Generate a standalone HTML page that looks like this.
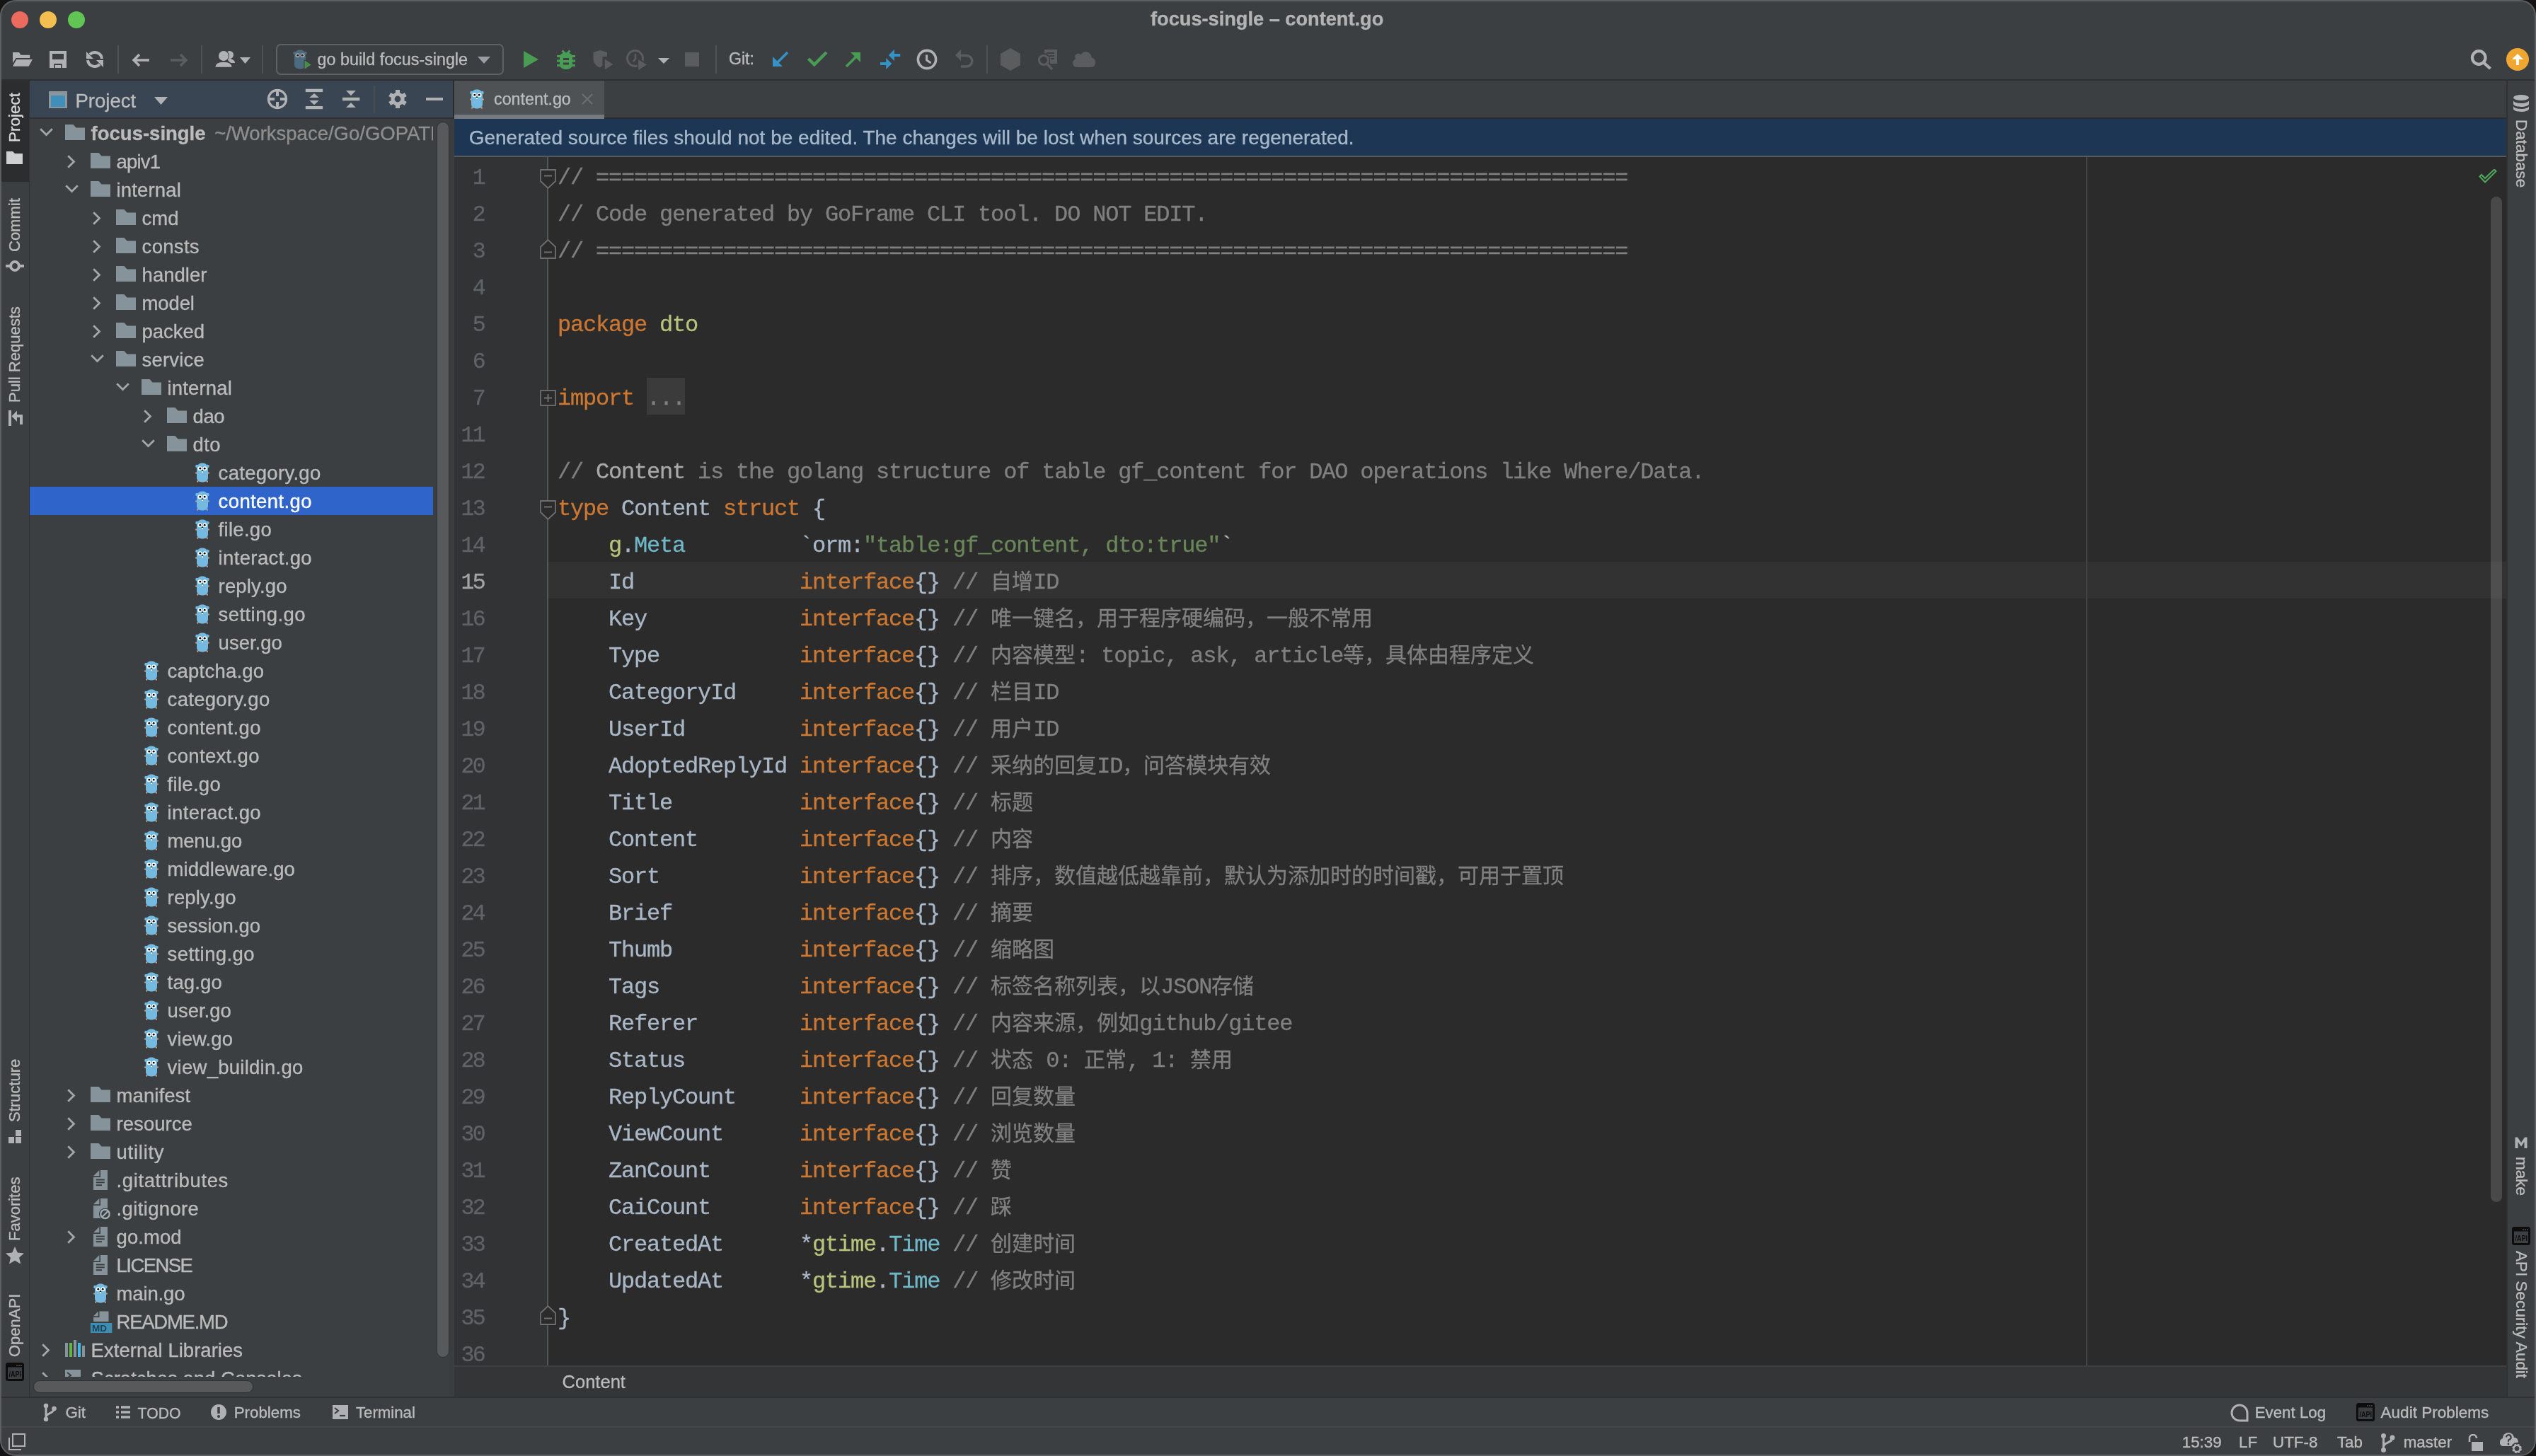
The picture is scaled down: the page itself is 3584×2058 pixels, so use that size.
<!DOCTYPE html><html lang="zh-CN"><head><meta charset="utf-8"><title>GoLand</title><style>
html,body{margin:0;padding:0;}
body{width:3584px;height:2058px;overflow:hidden;background:#141414;position:relative;font-family:'Liberation Sans',sans-serif;}
#win{position:absolute;left:0;top:0;width:3584px;height:2058px;border-radius:22px;overflow:hidden;background:#3c3f41;will-change:transform;}
#win div,#win svg{position:absolute;}
.t{white-space:pre;-webkit-text-stroke:0.35px currentColor;}
.code{font-family:'Liberation Mono',monospace;font-size:32px;letter-spacing:-1.2px;white-space:pre;-webkit-text-stroke:0.3px currentColor;}
.cj{font-size:30px;letter-spacing:0;}
.kw{color:#cc7832}.id{color:#a9b7c6}.cm{color:#808080}.cr{color:#a9a9a9}.pk{color:#b7c27b}.ty{color:#70b7c8}.st{color:#6a8759}

</style></head><body><div id="win">
<div style="left:0px;top:0px;width:3584px;height:112px;background:#3c3f41;"></div>
<div style="left:16px;top:16px;width:24px;height:24px;border-radius:50%;background:#ed6a5e"></div>
<div style="left:56px;top:16px;width:24px;height:24px;border-radius:50%;background:#f5bf4f"></div>
<div style="left:96px;top:16px;width:24px;height:24px;border-radius:50%;background:#61c554"></div>
<div class="t " style="left:1626px;top:12.88px;font-size:27.2px;line-height:27.2px;color:#b3b3b3;font-family:'Liberation Sans', sans-serif;font-weight:bold;">focus-single – content.go</div>
<div style="left:0px;top:112px;width:3584px;height:2px;background:#2e2f30;"></div>
<svg style="left:18px;top:72px;" width="29" height="23" viewBox="0 0 29 23"><path d="M0 2H9L11.4 5.8H24.1V10H4.5L0 17.3z" fill="#afb1b3"/><path d="M5.2 12H28L22.5 21.8H0z" fill="#afb1b3"/></svg>
<svg style="left:70px;top:72px;" width="24" height="24" viewBox="0 0 24 24"><path d="M0 0H24V24H0z M4 4.1V11.9H20V4.1z" fill="#afb1b3" fill-rule="evenodd"/><rect x="6.2" y="18" width="11.6" height="6" fill="#3c3f41"/><rect x="7.9" y="20" width="8.2" height="4" fill="#afb1b3"/></svg>
<svg style="left:122px;top:72px;" width="24" height="24" viewBox="0 0 24 24"><path d="M22 11A10 10 0 0 0 5 5" stroke="#afb1b3" stroke-width="4" fill="none"/><path d="M0 1V11H10z" fill="#afb1b3"/><path d="M2 13A10 10 0 0 0 19 19" stroke="#afb1b3" stroke-width="4" fill="none"/><path d="M24 23V13H14z" fill="#afb1b3"/></svg>
<div style="left:166px;top:64px;width:2px;height:40px;background:#505355;"></div>
<svg style="left:186px;top:75px;" width="26" height="20" viewBox="0 0 26 20"><path d="M25 10H4 M11 2L3 10l8 8" stroke="#afb1b3" stroke-width="3.5" fill="none"/></svg>
<svg style="left:240px;top:75px;" width="26" height="20" viewBox="0 0 26 20"><path d="M1 10h21 M15 2l8 8-8 8" stroke="#5a5c5e" stroke-width="3.5" fill="none"/></svg>
<div style="left:284px;top:64px;width:2px;height:40px;background:#505355;"></div>
<svg style="left:303px;top:71px;" width="31" height="25" viewBox="0 0 31 25"><circle cx="21.5" cy="6.5" r="5.5" fill="#afb1b3"/><path d="M17 11C25 12 29 14 29 18H22z" fill="#afb1b3"/><circle cx="13" cy="8" r="7.2" fill="#afb1b3" stroke="#3c3f41" stroke-width="1.6"/><path d="M0.5 24.5C0.5 18 5 16 13 16S25.5 18 25.5 24.5z" fill="#afb1b3" stroke="#3c3f41" stroke-width="1.6"/><circle cx="13" cy="8" r="7" fill="#afb1b3"/></svg>
<svg style="left:339px;top:81px;" width="15" height="9" viewBox="0 0 15 9"><path d="M0 0h15L7.5 9z" fill="#afb1b3"/></svg>
<div style="left:370px;top:64px;width:2px;height:40px;background:#505355;"></div>
<div style="left:390px;top:62px;width:318px;height:40px;border:2px solid #5e6161;border-radius:7px;"></div>
<svg style="left:414px;top:70px" width="20" height="28" viewBox="0 0 20 28"><use href="#gopherdim"/></svg>
<svg style="left:429px;top:84px;" width="12" height="15" viewBox="0 0 12 15"><path d="M1 0.5v14l10.5-7z" fill="#4a8b4e" stroke="#3c3f41" stroke-width="1"/></svg>
<div class="t " style="left:448.6px;top:73.19px;font-size:23.3px;line-height:23.3px;color:#bbbbbb;font-family:'Liberation Sans', sans-serif;">go build focus-single</div>
<svg style="left:675px;top:80px;" width="18" height="10" viewBox="0 0 18 10"><path d="M0 0h18L9 10z" fill="#9a9da1"/></svg>
<svg style="left:740px;top:72px;" width="21" height="24" viewBox="0 0 21 24"><path d="M0 0v24l21-12z" fill="#499c54"/></svg>
<svg style="left:787px;top:69px;" width="26" height="30" viewBox="0 0 26 30"><path d="M7.5 2.5L12 7M18.5 2.5L14 7" stroke="#499c54" stroke-width="3" fill="none"/><path d="M4 12C4 7 8 5.5 13 5.5S22 7 22 12V22C22 26.5 18 29 13 29S4 26.5 4 22z" fill="#499c54"/><rect x="0" y="9" width="26" height="3" fill="#499c54"/><rect x="0" y="15.5" width="26" height="3" fill="#499c54"/><rect x="0" y="22" width="26" height="3" fill="#499c54"/><rect x="9" y="13" width="8" height="3" fill="#3c3f41"/><rect x="9" y="19.5" width="8" height="3" fill="#3c3f41"/></svg>
<svg style="left:838px;top:70px;" width="30" height="31" viewBox="0 0 30 31"><path d="M0.5 4L10 1l10 3v6h-6.5v13l-4 2.5C4 23 0.5 19 0.5 13z" fill="#5a5c5e"/><path d="M16 12v18l14-9z" fill="#5a5c5e" stroke="#3c3f41" stroke-width="1.5"/></svg>
<svg style="left:885px;top:70px;" width="31" height="31" viewBox="0 0 31 31"><circle cx="12.5" cy="12.5" r="11" stroke="#5a5c5e" stroke-width="3" fill="none"/><path d="M13 6v7l-3 4" stroke="#5a5c5e" stroke-width="2.5" fill="none"/><path d="M16.5 12.5v18l14-9z" fill="#5a5c5e" stroke="#3c3f41" stroke-width="1.5"/></svg>
<svg style="left:930px;top:82px;" width="16" height="8" viewBox="0 0 16 8"><path d="M0 0h16L8 8z" fill="#afb1b3"/></svg>
<div style="left:968px;top:74px;width:20px;height:20px;background:#5a5c5e;"></div>
<div style="left:1011px;top:64px;width:2px;height:40px;background:#505355;"></div>
<div class="t " style="left:1030px;top:72.45px;font-size:23px;line-height:23px;color:#bbbbbb;font-family:'Liberation Sans', sans-serif;">Git:</div>
<svg style="left:1090px;top:70px;" width="26" height="28" viewBox="0 0 26 28"><path d="M2 10V24H16z" fill="#3592c4"/><path d="M23 4L7 20" stroke="#3592c4" stroke-width="3.6"/></svg>
<svg style="left:1140px;top:71px;" width="30" height="23" viewBox="0 0 30 23"><path d="M2.5 12l8.3 8.3L28 3" stroke="#499c54" stroke-width="4.4" fill="none"/></svg>
<svg style="left:1193px;top:72px;" width="25" height="25" viewBox="0 0 25 25"><path d="M9 2H23V16z" fill="#499c54"/><path d="M3 22L17 8" stroke="#499c54" stroke-width="3.6"/></svg>
<svg style="left:1243px;top:69px;" width="31" height="31" viewBox="0 0 31 31"><path d="M21 0.7L12.8 9 21 17.2z" fill="#3592c4"/><path d="M20 9H29.2" stroke="#3592c4" stroke-width="4"/><path d="M9.2 13L17.4 21 9.2 29z" fill="#3592c4"/><path d="M1 21H10.2" stroke="#3592c4" stroke-width="4"/></svg>
<svg style="left:1295px;top:69px;" width="30" height="30" viewBox="0 0 30 30"><circle cx="15" cy="15" r="12.6" stroke="#afb1b3" stroke-width="3.6" fill="none"/><path d="M14.6 8.5V16l6 4" stroke="#afb1b3" stroke-width="3" fill="none"/></svg>
<svg style="left:1349px;top:69px;" width="29" height="28" viewBox="0 0 29 28"><path d="M8 9.5h9a7.8 7.8 0 0 1 0 15.6H9" stroke="#5a5c5e" stroke-width="3.5" fill="none"/><path d="M9 1L1 9l8 8z" fill="#5a5c5e"/></svg>
<div style="left:1394px;top:64px;width:2px;height:40px;background:#505355;"></div>
<svg style="left:1414px;top:68px;" width="28" height="32" viewBox="0 0 28 32"><path d="M14 0l14 8v16L14 32 0 24V8z" fill="#5a5c5e"/></svg>
<svg style="left:1465px;top:69px;" width="30" height="30" viewBox="0 0 30 30"><path d="M11 1H29V21H19V14A9 9 0 0 0 11 6z" fill="#5a5c5e"/><path d="M14 6H25M18 10H25M20 14H25" stroke="#3c3f41" stroke-width="2"/><circle cx="10" cy="16" r="6.5" stroke="#5a5c5e" stroke-width="3.2" fill="none"/><path d="M14.5 21l7.5 8" stroke="#5a5c5e" stroke-width="3.5"/></svg>
<svg style="left:1516px;top:72px;" width="32" height="24" viewBox="0 0 32 24"><circle cx="8" cy="8.5" r="4.8" fill="#5a5c5e"/><circle cx="18.5" cy="9.5" r="8.3" fill="#5a5c5e"/><circle cx="26" cy="15.5" r="6" fill="#5a5c5e"/><rect x="0" y="11" width="32" height="12" rx="6" fill="#5a5c5e"/></svg>
<svg style="left:3490px;top:68px;" width="32" height="32" viewBox="0 0 32 32"><circle cx="13.2" cy="13.5" r="9.3" stroke="#afb1b3" stroke-width="4.2" fill="none"/><path d="M20 20.5l9.5 8.5" stroke="#afb1b3" stroke-width="4.3"/></svg>
<svg style="left:3542px;top:68px;" width="32" height="32" viewBox="0 0 32 32"><circle cx="16" cy="16" r="16" fill="#f0a732"/><path d="M16 8L7.8 16H14V24H17.8V16H24z" fill="#ffffff"/></svg>
<div style="left:0px;top:114px;width:41px;height:1860px;background:#3c3f41;"></div>
<div style="left:41px;top:114px;width:1px;height:1860px;background:#2f3133;"></div>
<div style="left:2px;top:114px;width:39px;height:143px;background:#2b2d2f;"></div>
<div class="t" style="left:21px;top:201px;font-size:22.5px;line-height:22.5px;color:#d8d8d8;transform-origin:0 0;transform:rotate(-90deg) translate(0,-11.2px);">Project</div>
<svg style="left:9px;top:214px;" width="23" height="18" viewBox="0 0 23 18"><path d="M0 0h9l3 3h11v15H0z" fill="#d0d0d0"/></svg>
<div class="t" style="left:21px;top:356px;font-size:22px;line-height:22px;color:#bbbbbb;transform-origin:0 0;transform:rotate(-90deg) translate(0,-11.0px);">Commit</div>
<svg style="left:6px;top:368px;" width="30" height="16" viewBox="0 0 30 16"><circle cx="15" cy="8" r="5.9" stroke="#afb1b3" stroke-width="4" fill="none"/><path d="M2 8h7M21 8h7" stroke="#afb1b3" stroke-width="4"/></svg>
<div class="t" style="left:21px;top:569px;font-size:22px;line-height:22px;color:#bbbbbb;transform-origin:0 0;transform:rotate(-90deg) translate(0,-11.0px);">Pull Requests</div>
<svg style="left:12px;top:580px;" width="21" height="23" viewBox="0 0 21 23"><rect x="0" y="0" width="4" height="22" fill="#afb1b3"/><path d="M4.5 8.3L12 0.6V16z" fill="#afb1b3"/><path d="M11 6H20V20H16V10H11z" fill="#afb1b3"/></svg>
<div class="t" style="left:21px;top:1586px;font-size:22px;line-height:22px;color:#bbbbbb;transform-origin:0 0;transform:rotate(-90deg) translate(0,-11.0px);">Structure</div>
<svg style="left:12px;top:1597px;" width="18" height="20" viewBox="0 0 18 20"><rect x="0" y="10" width="8" height="9" fill="#afb1b3"/><rect x="10" y="10" width="8" height="9" fill="#afb1b3"/><rect x="10" y="0" width="8" height="9" fill="#afb1b3"/></svg>
<div class="t" style="left:21px;top:1754px;font-size:22px;line-height:22px;color:#bbbbbb;transform-origin:0 0;transform:rotate(-90deg) translate(0,-11.0px);">Favorites</div>
<svg style="left:8px;top:1762px;" width="26" height="25" viewBox="0 0 26 25"><path d="M13 0l3.8 8.4 9.2 1-6.9 6.1 2 9-8.1-4.7-8 4.7 1.9-9L0 9.4l9.2-1z" fill="#afb1b3"/></svg>
<div class="t" style="left:21px;top:1918px;font-size:22px;line-height:22px;color:#bbbbbb;transform-origin:0 0;transform:rotate(-90deg) translate(0,-11.0px);">OpenAPI</div>
<svg style="left:8px;top:1926px" width="26" height="26" viewBox="0 0 26 26"><rect x="1.5" y="1.5" width="23" height="23" rx="2" fill="#3c3f41" stroke="#0d0d0d" stroke-width="3"/><rect x="1.5" y="1.5" width="23" height="5" fill="#0d0d0d"/><circle cx="16" cy="4" r="0.9" fill="#555"/><circle cx="19" cy="4" r="0.9" fill="#555"/><circle cx="22" cy="4" r="0.9" fill="#555"/><text x="4.5" y="19.5" font-family="Liberation Sans" font-weight="bold" font-size="10" fill="#0d0d0d" textLength="17.5" lengthAdjust="spacingAndGlyphs">/API</text></svg>
<div style="left:42px;top:114px;width:598px;height:1860px;background:#3c3f41;"></div>
<div style="left:42px;top:114px;width:598px;height:52px;background:#3a4554;"></div>
<div style="left:42px;top:166px;width:598px;height:2px;background:#2f3133;"></div>
<svg style="left:68px;top:128px;" width="28" height="26" viewBox="0 0 28 26"><rect x="1" y="1" width="26" height="24" fill="#8c959b"/><rect x="4" y="7" width="20" height="16" fill="#3f8fba"/></svg>
<div class="t " style="left:106.5px;top:128.62px;font-size:27.5px;line-height:27.5px;color:#bbbbbb;font-family:'Liberation Sans', sans-serif;">Project</div>
<svg style="left:218px;top:137px;" width="19" height="11" viewBox="0 0 19 11"><path d="M0 0h19L9.5 11z" fill="#afb1b3"/></svg>
<svg style="left:376px;top:124px;" width="32" height="32" viewBox="0 0 32 32"><circle cx="16" cy="16" r="12.5" stroke="#afb1b3" stroke-width="3.4" fill="none"/><path d="M16 4v8M16 20v8M4 16h8M20 16h8" stroke="#afb1b3" stroke-width="4"/></svg>
<svg style="left:431px;top:124px;" width="26" height="32" viewBox="0 0 26 32"><rect x="0.8" y="1.7" width="24.3" height="4.4" fill="#afb1b3"/><rect x="0.8" y="26" width="24.3" height="4.2" fill="#afb1b3"/><path d="M13 8L19.8 14.1H6.2z M6.2 18H19.8L13 24.2z" fill="#afb1b3"/></svg>
<svg style="left:483px;top:124px;" width="26" height="32" viewBox="0 0 26 32"><rect x="1" y="13.8" width="24.3" height="4.5" fill="#afb1b3"/><path d="M6 4.1H19.8L13 11.2z M13 20.9L19.8 28H6z" fill="#afb1b3"/></svg>
<div style="left:528px;top:121px;width:2px;height:39px;background:#4a4e52;"></div>
<svg style="left:548px;top:126px;" width="28" height="28" viewBox="0 0 28 28"><circle cx="14" cy="14" r="9.6" fill="#afb1b3"/><g fill="#afb1b3"><rect x="11" y="1" width="6" height="26"/><rect x="11" y="1" width="6" height="26" transform="rotate(60 14 14)"/><rect x="11" y="1" width="6" height="26" transform="rotate(120 14 14)"/></g><circle cx="14" cy="14" r="4.4" fill="#3a4554"/></svg>
<div style="left:602px;top:138px;width:24px;height:4px;background:#afb1b3;"></div>
<div style="left:42px;top:168px;width:575px;height:1778px;overflow:hidden;">
<svg style="left:13.5px;top:12.5px" width="19" height="12" viewBox="0 0 19 12"><path d="M1.2 1.2l8.3 8.3 8.3-8.3" stroke="#a4a6a8" stroke-width="2.8" fill="none"/></svg>
<svg style="left:50px;top:8px" width="28" height="22" viewBox="0 0 28 22"><path d="M0 0h11.5l4 4.5H28V22H0z" fill="#87939a"/></svg>
<div class="t" style="left:86.6px;top:6.62px;font-size:27.5px;line-height:27.5px;color:#bbbbbb;font-weight:bold">focus-single <span style="font-weight:normal;color:#8e8e8e;margin-left:5px">~/Workspace/Go/GOPATH/src/focus-single</span></div>
<svg style="left:52.5px;top:50.5px" width="12" height="19" viewBox="0 0 12 19"><path d="M1.2 1.2l8.3 8.3-8.3 8.3" stroke="#a4a6a8" stroke-width="2.8" fill="none"/></svg>
<svg style="left:86px;top:48px" width="28" height="22" viewBox="0 0 28 22"><path d="M0 0h11.5l4 4.5H28V22H0z" fill="#87939a"/></svg>
<div class="t" style="left:122.6px;top:46.62px;font-size:27.5px;line-height:27.5px;color:#bbbbbb;letter-spacing:-0.83px;">apiv1</div>
<svg style="left:49.5px;top:92.5px" width="19" height="12" viewBox="0 0 19 12"><path d="M1.2 1.2l8.3 8.3 8.3-8.3" stroke="#a4a6a8" stroke-width="2.8" fill="none"/></svg>
<svg style="left:86px;top:88px" width="28" height="22" viewBox="0 0 28 22"><path d="M0 0h11.5l4 4.5H28V22H0z" fill="#87939a"/></svg>
<div class="t" style="left:122.6px;top:86.62px;font-size:27.5px;line-height:27.5px;color:#bbbbbb;letter-spacing:0.14px;">internal</div>
<svg style="left:88.5px;top:130.5px" width="12" height="19" viewBox="0 0 12 19"><path d="M1.2 1.2l8.3 8.3-8.3 8.3" stroke="#a4a6a8" stroke-width="2.8" fill="none"/></svg>
<svg style="left:122px;top:128px" width="28" height="22" viewBox="0 0 28 22"><path d="M0 0h11.5l4 4.5H28V22H0z" fill="#87939a"/></svg>
<div class="t" style="left:158.6px;top:126.62px;font-size:27.5px;line-height:27.5px;color:#bbbbbb;letter-spacing:0.02px;">cmd</div>
<svg style="left:88.5px;top:170.5px" width="12" height="19" viewBox="0 0 12 19"><path d="M1.2 1.2l8.3 8.3-8.3 8.3" stroke="#a4a6a8" stroke-width="2.8" fill="none"/></svg>
<svg style="left:122px;top:168px" width="28" height="22" viewBox="0 0 28 22"><path d="M0 0h11.5l4 4.5H28V22H0z" fill="#87939a"/></svg>
<div class="t" style="left:158.6px;top:166.62px;font-size:27.5px;line-height:27.5px;color:#bbbbbb;letter-spacing:0.30px;">consts</div>
<svg style="left:88.5px;top:210.5px" width="12" height="19" viewBox="0 0 12 19"><path d="M1.2 1.2l8.3 8.3-8.3 8.3" stroke="#a4a6a8" stroke-width="2.8" fill="none"/></svg>
<svg style="left:122px;top:208px" width="28" height="22" viewBox="0 0 28 22"><path d="M0 0h11.5l4 4.5H28V22H0z" fill="#87939a"/></svg>
<div class="t" style="left:158.6px;top:206.62px;font-size:27.5px;line-height:27.5px;color:#bbbbbb;letter-spacing:0.01px;">handler</div>
<svg style="left:88.5px;top:250.5px" width="12" height="19" viewBox="0 0 12 19"><path d="M1.2 1.2l8.3 8.3-8.3 8.3" stroke="#a4a6a8" stroke-width="2.8" fill="none"/></svg>
<svg style="left:122px;top:248px" width="28" height="22" viewBox="0 0 28 22"><path d="M0 0h11.5l4 4.5H28V22H0z" fill="#87939a"/></svg>
<div class="t" style="left:158.6px;top:246.62px;font-size:27.5px;line-height:27.5px;color:#bbbbbb;letter-spacing:-0.14px;">model</div>
<svg style="left:88.5px;top:290.5px" width="12" height="19" viewBox="0 0 12 19"><path d="M1.2 1.2l8.3 8.3-8.3 8.3" stroke="#a4a6a8" stroke-width="2.8" fill="none"/></svg>
<svg style="left:122px;top:288px" width="28" height="22" viewBox="0 0 28 22"><path d="M0 0h11.5l4 4.5H28V22H0z" fill="#87939a"/></svg>
<div class="t" style="left:158.6px;top:286.62px;font-size:27.5px;line-height:27.5px;color:#bbbbbb;letter-spacing:-0.05px;">packed</div>
<svg style="left:85.5px;top:332.5px" width="19" height="12" viewBox="0 0 19 12"><path d="M1.2 1.2l8.3 8.3 8.3-8.3" stroke="#a4a6a8" stroke-width="2.8" fill="none"/></svg>
<svg style="left:122px;top:328px" width="28" height="22" viewBox="0 0 28 22"><path d="M0 0h11.5l4 4.5H28V22H0z" fill="#87939a"/></svg>
<div class="t" style="left:158.6px;top:326.62px;font-size:27.5px;line-height:27.5px;color:#bbbbbb;letter-spacing:0.18px;">service</div>
<svg style="left:121.5px;top:372.5px" width="19" height="12" viewBox="0 0 19 12"><path d="M1.2 1.2l8.3 8.3 8.3-8.3" stroke="#a4a6a8" stroke-width="2.8" fill="none"/></svg>
<svg style="left:158px;top:368px" width="28" height="22" viewBox="0 0 28 22"><path d="M0 0h11.5l4 4.5H28V22H0z" fill="#87939a"/></svg>
<div class="t" style="left:194.6px;top:366.62px;font-size:27.5px;line-height:27.5px;color:#bbbbbb;letter-spacing:0.14px;">internal</div>
<svg style="left:160.5px;top:410.5px" width="12" height="19" viewBox="0 0 12 19"><path d="M1.2 1.2l8.3 8.3-8.3 8.3" stroke="#a4a6a8" stroke-width="2.8" fill="none"/></svg>
<svg style="left:194px;top:408px" width="28" height="22" viewBox="0 0 28 22"><path d="M0 0h11.5l4 4.5H28V22H0z" fill="#87939a"/></svg>
<div class="t" style="left:230.60000000000002px;top:406.62px;font-size:27.5px;line-height:27.5px;color:#bbbbbb;letter-spacing:-0.50px;">dao</div>
<svg style="left:157.5px;top:452.5px" width="19" height="12" viewBox="0 0 19 12"><path d="M1.2 1.2l8.3 8.3 8.3-8.3" stroke="#a4a6a8" stroke-width="2.8" fill="none"/></svg>
<svg style="left:194px;top:448px" width="28" height="22" viewBox="0 0 28 22"><path d="M0 0h11.5l4 4.5H28V22H0z" fill="#87939a"/></svg>
<div class="t" style="left:230.60000000000002px;top:446.62px;font-size:27.5px;line-height:27.5px;color:#bbbbbb;letter-spacing:0.39px;">dto</div>
<svg style="left:234px;top:486px" width="20" height="28" viewBox="0 0 20 28"><use href="#gopher"/></svg>
<div class="t" style="left:266.6px;top:486.62px;font-size:27.5px;line-height:27.5px;color:#bbbbbb;letter-spacing:0.30px;">category.go</div>
<div style="left:0;top:520px;width:600px;height:40px;background:#2f65ca"></div>
<svg style="left:234px;top:526px" width="20" height="28" viewBox="0 0 20 28"><use href="#gopher"/></svg>
<div class="t" style="left:266.6px;top:526.62px;font-size:27.5px;line-height:27.5px;color:#ffffff;letter-spacing:0.38px;">content.go</div>
<svg style="left:234px;top:566px" width="20" height="28" viewBox="0 0 20 28"><use href="#gopher"/></svg>
<div class="t" style="left:266.6px;top:566.62px;font-size:27.5px;line-height:27.5px;color:#bbbbbb;letter-spacing:0.29px;">file.go</div>
<svg style="left:234px;top:606px" width="20" height="28" viewBox="0 0 20 28"><use href="#gopher"/></svg>
<div class="t" style="left:266.6px;top:606.62px;font-size:27.5px;line-height:27.5px;color:#bbbbbb;letter-spacing:0.36px;">interact.go</div>
<svg style="left:234px;top:646px" width="20" height="28" viewBox="0 0 20 28"><use href="#gopher"/></svg>
<div class="t" style="left:266.6px;top:646.62px;font-size:27.5px;line-height:27.5px;color:#bbbbbb;letter-spacing:0.15px;">reply.go</div>
<svg style="left:234px;top:686px" width="20" height="28" viewBox="0 0 20 28"><use href="#gopher"/></svg>
<div class="t" style="left:266.6px;top:686.62px;font-size:27.5px;line-height:27.5px;color:#bbbbbb;letter-spacing:0.42px;">setting.go</div>
<svg style="left:234px;top:726px" width="20" height="28" viewBox="0 0 20 28"><use href="#gopher"/></svg>
<div class="t" style="left:266.6px;top:726.62px;font-size:27.5px;line-height:27.5px;color:#bbbbbb;letter-spacing:0.01px;">user.go</div>
<svg style="left:162px;top:766px" width="20" height="28" viewBox="0 0 20 28"><use href="#gopher"/></svg>
<div class="t" style="left:194.6px;top:766.62px;font-size:27.5px;line-height:27.5px;color:#bbbbbb;letter-spacing:0.22px;">captcha.go</div>
<svg style="left:162px;top:806px" width="20" height="28" viewBox="0 0 20 28"><use href="#gopher"/></svg>
<div class="t" style="left:194.6px;top:806.62px;font-size:27.5px;line-height:27.5px;color:#bbbbbb;letter-spacing:0.30px;">category.go</div>
<svg style="left:162px;top:846px" width="20" height="28" viewBox="0 0 20 28"><use href="#gopher"/></svg>
<div class="t" style="left:194.6px;top:846.62px;font-size:27.5px;line-height:27.5px;color:#bbbbbb;letter-spacing:0.38px;">content.go</div>
<svg style="left:162px;top:886px" width="20" height="28" viewBox="0 0 20 28"><use href="#gopher"/></svg>
<div class="t" style="left:194.6px;top:886.62px;font-size:27.5px;line-height:27.5px;color:#bbbbbb;letter-spacing:0.33px;">context.go</div>
<svg style="left:162px;top:926px" width="20" height="28" viewBox="0 0 20 28"><use href="#gopher"/></svg>
<div class="t" style="left:194.6px;top:926.62px;font-size:27.5px;line-height:27.5px;color:#bbbbbb;letter-spacing:0.29px;">file.go</div>
<svg style="left:162px;top:966px" width="20" height="28" viewBox="0 0 20 28"><use href="#gopher"/></svg>
<div class="t" style="left:194.6px;top:966.62px;font-size:27.5px;line-height:27.5px;color:#bbbbbb;letter-spacing:0.36px;">interact.go</div>
<svg style="left:162px;top:1006px" width="20" height="28" viewBox="0 0 20 28"><use href="#gopher"/></svg>
<div class="t" style="left:194.6px;top:1006.62px;font-size:27.5px;line-height:27.5px;color:#bbbbbb;letter-spacing:-0.23px;">menu.go</div>
<svg style="left:162px;top:1046px" width="20" height="28" viewBox="0 0 20 28"><use href="#gopher"/></svg>
<div class="t" style="left:194.6px;top:1046.62px;font-size:27.5px;line-height:27.5px;color:#bbbbbb;letter-spacing:0.12px;">middleware.go</div>
<svg style="left:162px;top:1086px" width="20" height="28" viewBox="0 0 20 28"><use href="#gopher"/></svg>
<div class="t" style="left:194.6px;top:1086.62px;font-size:27.5px;line-height:27.5px;color:#bbbbbb;letter-spacing:0.15px;">reply.go</div>
<svg style="left:162px;top:1126px" width="20" height="28" viewBox="0 0 20 28"><use href="#gopher"/></svg>
<div class="t" style="left:194.6px;top:1126.62px;font-size:27.5px;line-height:27.5px;color:#bbbbbb;letter-spacing:0.01px;">session.go</div>
<svg style="left:162px;top:1166px" width="20" height="28" viewBox="0 0 20 28"><use href="#gopher"/></svg>
<div class="t" style="left:194.6px;top:1166.62px;font-size:27.5px;line-height:27.5px;color:#bbbbbb;letter-spacing:0.42px;">setting.go</div>
<svg style="left:162px;top:1206px" width="20" height="28" viewBox="0 0 20 28"><use href="#gopher"/></svg>
<div class="t" style="left:194.6px;top:1206.62px;font-size:27.5px;line-height:27.5px;color:#bbbbbb;letter-spacing:0.16px;">tag.go</div>
<svg style="left:162px;top:1246px" width="20" height="28" viewBox="0 0 20 28"><use href="#gopher"/></svg>
<div class="t" style="left:194.6px;top:1246.62px;font-size:27.5px;line-height:27.5px;color:#bbbbbb;letter-spacing:0.01px;">user.go</div>
<svg style="left:162px;top:1286px" width="20" height="28" viewBox="0 0 20 28"><use href="#gopher"/></svg>
<div class="t" style="left:194.6px;top:1286.62px;font-size:27.5px;line-height:27.5px;color:#bbbbbb;letter-spacing:0.11px;">view.go</div>
<svg style="left:162px;top:1326px" width="20" height="28" viewBox="0 0 20 28"><use href="#gopher"/></svg>
<div class="t" style="left:194.6px;top:1326.62px;font-size:27.5px;line-height:27.5px;color:#bbbbbb;letter-spacing:0.26px;">view_buildin.go</div>
<svg style="left:52.5px;top:1370.5px" width="12" height="19" viewBox="0 0 12 19"><path d="M1.2 1.2l8.3 8.3-8.3 8.3" stroke="#a4a6a8" stroke-width="2.8" fill="none"/></svg>
<svg style="left:86px;top:1368px" width="28" height="22" viewBox="0 0 28 22"><path d="M0 0h11.5l4 4.5H28V22H0z" fill="#87939a"/></svg>
<div class="t" style="left:122.6px;top:1366.62px;font-size:27.5px;line-height:27.5px;color:#bbbbbb;letter-spacing:0.08px;">manifest</div>
<svg style="left:52.5px;top:1410.5px" width="12" height="19" viewBox="0 0 12 19"><path d="M1.2 1.2l8.3 8.3-8.3 8.3" stroke="#a4a6a8" stroke-width="2.8" fill="none"/></svg>
<svg style="left:86px;top:1408px" width="28" height="22" viewBox="0 0 28 22"><path d="M0 0h11.5l4 4.5H28V22H0z" fill="#87939a"/></svg>
<div class="t" style="left:122.6px;top:1406.62px;font-size:27.5px;line-height:27.5px;color:#bbbbbb;letter-spacing:0.03px;">resource</div>
<svg style="left:52.5px;top:1450.5px" width="12" height="19" viewBox="0 0 12 19"><path d="M1.2 1.2l8.3 8.3-8.3 8.3" stroke="#a4a6a8" stroke-width="2.8" fill="none"/></svg>
<svg style="left:86px;top:1448px" width="28" height="22" viewBox="0 0 28 22"><path d="M0 0h11.5l4 4.5H28V22H0z" fill="#87939a"/></svg>
<div class="t" style="left:122.6px;top:1446.62px;font-size:27.5px;line-height:27.5px;color:#bbbbbb;letter-spacing:0.72px;">utility</div>
<svg style="left:90px;top:1486px" width="20" height="28" viewBox="0 0 20 28"><path d="M10 0H20V28H0V10H10z" fill="#87939a"/><path d="M8.3 0V8.3H0z" fill="#87939a"/><rect x="3.8" y="12.6" width="12" height="1.9" fill="#3a3a3a"/><rect x="3.8" y="16.4" width="12" height="1.9" fill="#3a3a3a"/><rect x="3.8" y="20.2" width="8.2" height="1.9" fill="#3a3a3a"/></svg>
<div class="t" style="left:122.6px;top:1486.62px;font-size:27.5px;line-height:27.5px;color:#bbbbbb;letter-spacing:0.61px;">.gitattributes</div>
<svg style="left:90px;top:1526px" width="26" height="32" viewBox="0 0 26 32"><path d="M10 0H20V28H0V10H10z" fill="#87939a"/><path d="M8.3 0V8.3H0z" fill="#87939a"/><circle cx="16.5" cy="22" r="8.6" fill="#3c3f41"/><circle cx="16.5" cy="22" r="6.2" stroke="#a3b0b8" stroke-width="2.2" fill="none"/><path d="M12.5 26l8-8" stroke="#a3b0b8" stroke-width="2.2"/></svg>
<div class="t" style="left:122.6px;top:1526.62px;font-size:27.5px;line-height:27.5px;color:#bbbbbb;letter-spacing:0.35px;">.gitignore</div>
<svg style="left:52.5px;top:1570.5px" width="12" height="19" viewBox="0 0 12 19"><path d="M1.2 1.2l8.3 8.3-8.3 8.3" stroke="#a4a6a8" stroke-width="2.8" fill="none"/></svg>
<svg style="left:90px;top:1566px" width="20" height="28" viewBox="0 0 20 28"><path d="M10 0H20V28H0V10H10z" fill="#87939a"/><path d="M8.3 0V8.3H0z" fill="#87939a"/><rect x="3.8" y="12.6" width="12" height="1.9" fill="#3a3a3a"/><rect x="3.8" y="16.4" width="12" height="1.9" fill="#3a3a3a"/><rect x="3.8" y="20.2" width="8.2" height="1.9" fill="#3a3a3a"/></svg>
<div class="t" style="left:122.6px;top:1566.62px;font-size:27.5px;line-height:27.5px;color:#bbbbbb;letter-spacing:0.06px;">go.mod</div>
<svg style="left:90px;top:1606px" width="20" height="28" viewBox="0 0 20 28"><path d="M10 0H20V28H0V10H10z" fill="#87939a"/><path d="M8.3 0V8.3H0z" fill="#87939a"/><rect x="3.8" y="12.6" width="12" height="1.9" fill="#3a3a3a"/><rect x="3.8" y="16.4" width="12" height="1.9" fill="#3a3a3a"/><rect x="3.8" y="20.2" width="8.2" height="1.9" fill="#3a3a3a"/></svg>
<div class="t" style="left:122.6px;top:1606.62px;font-size:27.5px;line-height:27.5px;color:#bbbbbb;letter-spacing:-1.57px;">LICENSE</div>
<svg style="left:90px;top:1646px" width="20" height="28" viewBox="0 0 20 28"><use href="#gopher"/></svg>
<div class="t" style="left:122.6px;top:1646.62px;font-size:27.5px;line-height:27.5px;color:#bbbbbb;letter-spacing:-0.15px;">main.go</div>
<svg style="left:86px;top:1685px" width="31" height="32" viewBox="0 0 31 32"><path d="M12.5 0.6H25.5V15H4.1V9H12.5z" fill="#87939a"/><path d="M10.8 0.6V7.3H4.1z" fill="#87939a"/><rect x="0" y="17" width="30.3" height="14" fill="#3d8eb2"/><text x="2" y="29.3" font-family="Liberation Sans" font-weight="bold" font-size="13.5" fill="#1d4556" textLength="21" lengthAdjust="spacingAndGlyphs">MD</text></svg>
<div class="t" style="left:122.6px;top:1686.62px;font-size:27.5px;line-height:27.5px;color:#bbbbbb;letter-spacing:-1.26px;">README.MD</div>
<svg style="left:16.5px;top:1730.5px" width="12" height="19" viewBox="0 0 12 19"><path d="M1.2 1.2l8.3 8.3-8.3 8.3" stroke="#a4a6a8" stroke-width="2.8" fill="none"/></svg>
<svg style="left:48px;top:1726px" width="30" height="24" viewBox="0 0 30 24"><rect x="2" y="4" width="4" height="20" fill="#87939a"/><rect x="8" y="4" width="4" height="20" fill="#62b543"/><rect x="14" y="0" width="4" height="24" fill="#87939a"/><rect x="20" y="4" width="4" height="20" fill="#40b6e0"/><rect x="26" y="8" width="4" height="16" fill="#87939a"/></svg>
<div class="t" style="left:86.6px;top:1726.62px;font-size:27.5px;line-height:27.5px;color:#bbbbbb;letter-spacing:0.03px;">External Libraries</div>
<svg style="left:16.5px;top:1770.5px" width="12" height="19" viewBox="0 0 12 19"><path d="M1.2 1.2l8.3 8.3-8.3 8.3" stroke="#a4a6a8" stroke-width="2.8" fill="none"/></svg>
<svg style="left:50px;top:1768px" width="28" height="24" viewBox="0 0 28 24"><rect x="0" y="0" width="22" height="18" fill="#87939a"/><path d="M3 4l5 4-5 4" stroke="#3c3f41" stroke-width="2" fill="none"/><circle cx="20" cy="20" r="7" fill="#3d9fd6"/></svg>
<div class="t" style="left:86.6px;top:1766.62px;font-size:27.5px;line-height:27.5px;color:#bbbbbb;">Scratches and Consoles</div>
</div>
<div style="left:612px;top:168px;width:28px;height:1778px;background:#3c3f41;"></div>
<div style="left:617px;top:172px;width:16px;height:1745px;background:#58595b;border:1px solid #2f3133;border-radius:9px;"></div>
<div style="left:42px;top:1946px;width:598px;height:28px;background:#3c3f41;"></div>
<div style="left:47px;top:1951px;width:309px;height:16px;background:#58595b;border:1px solid #2f3133;border-radius:9px;"></div>
<div style="left:640px;top:114px;width:2px;height:54px;background:#2b2b2b;"></div>
<div style="left:635px;top:168px;width:5px;height:1806px;background:#3a3d3f;"></div>
<div style="left:642px;top:114px;width:2901px;height:52px;background:#3c3f41;"></div>
<div style="left:642px;top:114px;width:212px;height:48px;background:#4e5254;"></div>
<div style="left:642px;top:162px;width:212px;height:6px;background:#747a80;"></div>
<svg style="left:664px;top:126px" width="20" height="28" viewBox="0 0 20 28"><use href="#gopher"/></svg>
<div class="t " style="left:698px;top:128.79px;font-size:23.3px;line-height:23.3px;color:#bbbbbb;font-family:'Liberation Sans', sans-serif;">content.go</div>
<svg style="left:822px;top:132px;" width="16" height="16" viewBox="0 0 16 16"><path d="M1 1l14 14M15 1L1 15" stroke="#6b6f73" stroke-width="2.2"/></svg>
<div style="left:854px;top:166px;width:2689px;height:2px;background:#2b2b2b;"></div>
<div style="left:642px;top:168px;width:2901px;height:52px;background:#1d3653;"></div>
<div class="t " style="left:662.7px;top:180.60px;font-size:28px;line-height:28px;color:#a7b8cb;font-family:'Liberation Sans', sans-serif;">Generated source files should not be edited. The changes will be lost when sources are regenerated.</div>
<div style="left:642px;top:220px;width:2901px;height:2px;background:#56595c;"></div>
<div style="left:642px;top:222px;width:2901px;height:1708px;background:#2b2b2b;"></div>
<div style="left:642px;top:222px;width:131px;height:1708px;background:#313335;"></div>
<div style="left:775px;top:794px;width:2768px;height:52px;background:#323232;"></div>
<div style="left:642px;top:794px;width:131px;height:52px;background:#313335;"></div>
<div style="left:773px;top:222px;width:2px;height:1708px;background:#555555;"></div>
<div style="left:2948px;top:222px;width:2px;height:1708px;background:#444444;"></div>
<div class="code" style="left:584px;top:236.06px;width:100px;text-align:right;font-size:31.5px;letter-spacing:-2.7px;line-height:32px;color:#606366">1</div>
<div class="code" style="left:788px;top:235.68px;line-height:32px;"><span class="cm">// =================================================================================</span></div>
<div class="code" style="left:584px;top:288.06px;width:100px;text-align:right;font-size:31.5px;letter-spacing:-2.7px;line-height:32px;color:#606366">2</div>
<div class="code" style="left:788px;top:287.68px;line-height:32px;"><span class="cm">// Code generated by GoFrame CLI tool. DO NOT EDIT.</span></div>
<div class="code" style="left:584px;top:340.06px;width:100px;text-align:right;font-size:31.5px;letter-spacing:-2.7px;line-height:32px;color:#606366">3</div>
<div class="code" style="left:788px;top:339.68px;line-height:32px;"><span class="cm">// =================================================================================</span></div>
<div class="code" style="left:584px;top:392.06px;width:100px;text-align:right;font-size:31.5px;letter-spacing:-2.7px;line-height:32px;color:#606366">4</div>
<div class="code" style="left:584px;top:444.06px;width:100px;text-align:right;font-size:31.5px;letter-spacing:-2.7px;line-height:32px;color:#606366">5</div>
<div class="code" style="left:788px;top:443.68px;line-height:32px;"><span class="kw">package</span><span class="id"> </span><span class="pk">dto</span></div>
<div class="code" style="left:584px;top:496.06px;width:100px;text-align:right;font-size:31.5px;letter-spacing:-2.7px;line-height:32px;color:#606366">6</div>
<div class="code" style="left:584px;top:548.06px;width:100px;text-align:right;font-size:31.5px;letter-spacing:-2.7px;line-height:32px;color:#606366">7</div>
<div class="code" style="left:788px;top:547.68px;line-height:32px;"><span class="kw">import</span><span class="id"> </span><span style="background:#3b3b3b;color:#808080;display:inline-block;height:52px;line-height:60px;vertical-align:top;margin-top:-14px">...</span></div>
<div class="code" style="left:584px;top:600.06px;width:100px;text-align:right;font-size:31.5px;letter-spacing:-2.7px;line-height:32px;color:#606366">11</div>
<div class="code" style="left:584px;top:652.06px;width:100px;text-align:right;font-size:31.5px;letter-spacing:-2.7px;line-height:32px;color:#606366">12</div>
<div class="code" style="left:788px;top:651.68px;line-height:32px;"><span class="cm">// </span><span class="cr">Content</span><span class="cm"> is the golang structure of table gf_content for DAO operations like Where/Data.</span></div>
<div class="code" style="left:584px;top:704.06px;width:100px;text-align:right;font-size:31.5px;letter-spacing:-2.7px;line-height:32px;color:#606366">13</div>
<div class="code" style="left:788px;top:703.68px;line-height:32px;"><span class="kw">type</span><span class="id"> Content </span><span class="kw">struct</span><span class="id"> {</span></div>
<div class="code" style="left:584px;top:756.06px;width:100px;text-align:right;font-size:31.5px;letter-spacing:-2.7px;line-height:32px;color:#606366">14</div>
<div class="code" style="left:788px;top:755.68px;line-height:32px;"><span class="id">    </span><span class="pk">g</span><span class="id">.</span><span class="ty">Meta</span><span class="id">         `orm:</span><span class="st">"table:gf_content, dto:true"</span><span class="id">`</span></div>
<div class="code" style="left:584px;top:808.06px;width:100px;text-align:right;font-size:31.5px;letter-spacing:-2.7px;line-height:32px;color:#a4a3a3">15</div>
<div class="code" style="left:788px;top:807.68px;line-height:32px;"><span class="id">    Id             </span><span class="kw">interface</span><span class="id">{}</span><span class="cm"> // <span class="cj">自增</span>ID</span></div>
<div class="code" style="left:584px;top:860.06px;width:100px;text-align:right;font-size:31.5px;letter-spacing:-2.7px;line-height:32px;color:#606366">16</div>
<div class="code" style="left:788px;top:859.68px;line-height:32px;"><span class="id">    Key            </span><span class="kw">interface</span><span class="id">{}</span><span class="cm"> // <span class="cj">唯一键名，用于程序硬编码，一般不常用</span></span></div>
<div class="code" style="left:584px;top:912.06px;width:100px;text-align:right;font-size:31.5px;letter-spacing:-2.7px;line-height:32px;color:#606366">17</div>
<div class="code" style="left:788px;top:911.68px;line-height:32px;"><span class="id">    Type           </span><span class="kw">interface</span><span class="id">{}</span><span class="cm"> // <span class="cj">内容模型</span>: topic, ask, article<span class="cj">等，具体由程序定义</span></span></div>
<div class="code" style="left:584px;top:964.06px;width:100px;text-align:right;font-size:31.5px;letter-spacing:-2.7px;line-height:32px;color:#606366">18</div>
<div class="code" style="left:788px;top:963.68px;line-height:32px;"><span class="id">    CategoryId     </span><span class="kw">interface</span><span class="id">{}</span><span class="cm"> // <span class="cj">栏目</span>ID</span></div>
<div class="code" style="left:584px;top:1016.06px;width:100px;text-align:right;font-size:31.5px;letter-spacing:-2.7px;line-height:32px;color:#606366">19</div>
<div class="code" style="left:788px;top:1015.68px;line-height:32px;"><span class="id">    UserId         </span><span class="kw">interface</span><span class="id">{}</span><span class="cm"> // <span class="cj">用户</span>ID</span></div>
<div class="code" style="left:584px;top:1068.06px;width:100px;text-align:right;font-size:31.5px;letter-spacing:-2.7px;line-height:32px;color:#606366">20</div>
<div class="code" style="left:788px;top:1067.68px;line-height:32px;"><span class="id">    AdoptedReplyId </span><span class="kw">interface</span><span class="id">{}</span><span class="cm"> // <span class="cj">采纳的回复</span>ID<span class="cj">，问答模块有效</span></span></div>
<div class="code" style="left:584px;top:1120.06px;width:100px;text-align:right;font-size:31.5px;letter-spacing:-2.7px;line-height:32px;color:#606366">21</div>
<div class="code" style="left:788px;top:1119.68px;line-height:32px;"><span class="id">    Title          </span><span class="kw">interface</span><span class="id">{}</span><span class="cm"> // <span class="cj">标题</span></span></div>
<div class="code" style="left:584px;top:1172.06px;width:100px;text-align:right;font-size:31.5px;letter-spacing:-2.7px;line-height:32px;color:#606366">22</div>
<div class="code" style="left:788px;top:1171.68px;line-height:32px;"><span class="id">    Content        </span><span class="kw">interface</span><span class="id">{}</span><span class="cm"> // <span class="cj">内容</span></span></div>
<div class="code" style="left:584px;top:1224.06px;width:100px;text-align:right;font-size:31.5px;letter-spacing:-2.7px;line-height:32px;color:#606366">23</div>
<div class="code" style="left:788px;top:1223.68px;line-height:32px;"><span class="id">    Sort           </span><span class="kw">interface</span><span class="id">{}</span><span class="cm"> // <span class="cj">排序，数值越低越靠前，默认为添加时的时间戳，可用于置顶</span></span></div>
<div class="code" style="left:584px;top:1276.06px;width:100px;text-align:right;font-size:31.5px;letter-spacing:-2.7px;line-height:32px;color:#606366">24</div>
<div class="code" style="left:788px;top:1275.68px;line-height:32px;"><span class="id">    Brief          </span><span class="kw">interface</span><span class="id">{}</span><span class="cm"> // <span class="cj">摘要</span></span></div>
<div class="code" style="left:584px;top:1328.06px;width:100px;text-align:right;font-size:31.5px;letter-spacing:-2.7px;line-height:32px;color:#606366">25</div>
<div class="code" style="left:788px;top:1327.68px;line-height:32px;"><span class="id">    Thumb          </span><span class="kw">interface</span><span class="id">{}</span><span class="cm"> // <span class="cj">缩略图</span></span></div>
<div class="code" style="left:584px;top:1380.06px;width:100px;text-align:right;font-size:31.5px;letter-spacing:-2.7px;line-height:32px;color:#606366">26</div>
<div class="code" style="left:788px;top:1379.68px;line-height:32px;"><span class="id">    Tags           </span><span class="kw">interface</span><span class="id">{}</span><span class="cm"> // <span class="cj">标签名称列表，以</span>JSON<span class="cj">存储</span></span></div>
<div class="code" style="left:584px;top:1432.06px;width:100px;text-align:right;font-size:31.5px;letter-spacing:-2.7px;line-height:32px;color:#606366">27</div>
<div class="code" style="left:788px;top:1431.68px;line-height:32px;"><span class="id">    Referer        </span><span class="kw">interface</span><span class="id">{}</span><span class="cm"> // <span class="cj">内容来源，例如</span>github/gitee</span></div>
<div class="code" style="left:584px;top:1484.06px;width:100px;text-align:right;font-size:31.5px;letter-spacing:-2.7px;line-height:32px;color:#606366">28</div>
<div class="code" style="left:788px;top:1483.68px;line-height:32px;"><span class="id">    Status         </span><span class="kw">interface</span><span class="id">{}</span><span class="cm"> // <span class="cj">状态</span> 0: <span class="cj">正常</span>, 1: <span class="cj">禁用</span></span></div>
<div class="code" style="left:584px;top:1536.06px;width:100px;text-align:right;font-size:31.5px;letter-spacing:-2.7px;line-height:32px;color:#606366">29</div>
<div class="code" style="left:788px;top:1535.68px;line-height:32px;"><span class="id">    ReplyCount     </span><span class="kw">interface</span><span class="id">{}</span><span class="cm"> // <span class="cj">回复数量</span></span></div>
<div class="code" style="left:584px;top:1588.06px;width:100px;text-align:right;font-size:31.5px;letter-spacing:-2.7px;line-height:32px;color:#606366">30</div>
<div class="code" style="left:788px;top:1587.68px;line-height:32px;"><span class="id">    ViewCount      </span><span class="kw">interface</span><span class="id">{}</span><span class="cm"> // <span class="cj">浏览数量</span></span></div>
<div class="code" style="left:584px;top:1640.06px;width:100px;text-align:right;font-size:31.5px;letter-spacing:-2.7px;line-height:32px;color:#606366">31</div>
<div class="code" style="left:788px;top:1639.68px;line-height:32px;"><span class="id">    ZanCount       </span><span class="kw">interface</span><span class="id">{}</span><span class="cm"> // <span class="cj">赞</span></span></div>
<div class="code" style="left:584px;top:1692.06px;width:100px;text-align:right;font-size:31.5px;letter-spacing:-2.7px;line-height:32px;color:#606366">32</div>
<div class="code" style="left:788px;top:1691.68px;line-height:32px;"><span class="id">    CaiCount       </span><span class="kw">interface</span><span class="id">{}</span><span class="cm"> // <span class="cj">踩</span></span></div>
<div class="code" style="left:584px;top:1744.06px;width:100px;text-align:right;font-size:31.5px;letter-spacing:-2.7px;line-height:32px;color:#606366">33</div>
<div class="code" style="left:788px;top:1743.68px;line-height:32px;"><span class="id">    CreatedAt      *</span><span class="pk">gtime</span><span class="id">.</span><span class="ty">Time</span><span class="cm"> // <span class="cj">创建时间</span></span></div>
<div class="code" style="left:584px;top:1796.06px;width:100px;text-align:right;font-size:31.5px;letter-spacing:-2.7px;line-height:32px;color:#606366">34</div>
<div class="code" style="left:788px;top:1795.68px;line-height:32px;"><span class="id">    UpdatedAt      *</span><span class="pk">gtime</span><span class="id">.</span><span class="ty">Time</span><span class="cm"> // <span class="cj">修改时间</span></span></div>
<div class="code" style="left:584px;top:1848.06px;width:100px;text-align:right;font-size:31.5px;letter-spacing:-2.7px;line-height:32px;color:#606366">35</div>
<div class="code" style="left:788px;top:1847.68px;line-height:32px;"><span class="id">}</span></div>
<div class="code" style="left:584px;top:1900.06px;width:100px;text-align:right;font-size:31.5px;letter-spacing:-2.7px;line-height:32px;color:#606366">36</div>
<svg style="left:763px;top:239px;" width="23" height="28" viewBox="0 0 23 28"><path d="M1 1h21v16l-10.5 10L1 17z" fill="#2b2b2b" stroke="#6e6e6e" stroke-width="1.8"/><path d="M6 9.5h11" stroke="#6e6e6e" stroke-width="2"/></svg>
<svg style="left:763px;top:338px;" width="23" height="28" viewBox="0 0 23 28"><path d="M1 27h21V11L11.5 1 1 11z" fill="#2b2b2b" stroke="#6e6e6e" stroke-width="1.8"/><path d="M6 18.5h11" stroke="#6e6e6e" stroke-width="2"/></svg>
<svg style="left:763px;top:551px;" width="23" height="23" viewBox="0 0 23 23"><rect x="1" y="1" width="21" height="21" fill="#2b2b2b" stroke="#6e6e6e" stroke-width="1.8"/><path d="M6 11.5h11M11.5 6v11" stroke="#6e6e6e" stroke-width="2"/></svg>
<svg style="left:763px;top:707px;" width="23" height="28" viewBox="0 0 23 28"><path d="M1 1h21v16l-10.5 10L1 17z" fill="#2b2b2b" stroke="#6e6e6e" stroke-width="1.8"/><path d="M6 9.5h11" stroke="#6e6e6e" stroke-width="2"/></svg>
<svg style="left:763px;top:1845px;" width="23" height="28" viewBox="0 0 23 28"><path d="M1 27h21V11L11.5 1 1 11z" fill="#2b2b2b" stroke="#6e6e6e" stroke-width="1.8"/><path d="M6 18.5h11" stroke="#6e6e6e" stroke-width="2"/></svg>
<svg style="left:3503px;top:239px;" width="26" height="21" viewBox="0 0 26 21"><path d="M1.5 10.5l2.5-2.5 5 5L22 0.5l2.5 2.5L9 18.5z" stroke="#4fa85a" stroke-width="2" fill="none"/></svg>
<div style="left:3520px;top:278px;width:16px;height:1421px;background:rgba(255,255,255,0.145);border-radius:8px;"></div>
<div style="left:642px;top:1930px;width:2901px;height:2px;background:#3d3f41;"></div>
<div style="left:642px;top:1932px;width:2901px;height:42px;background:#333537;"></div>
<div class="t " style="left:794.6px;top:1941.33px;font-size:25.5px;line-height:25.5px;color:#bbbbbb;font-family:'Liberation Sans', sans-serif;">Content</div>
<div style="left:3542px;top:114px;width:2px;height:1860px;background:#2f3133;"></div>
<div style="left:3544px;top:114px;width:38px;height:1860px;background:#3c3f41;"></div>
<svg style="left:3551px;top:134px;" width="24" height="24" viewBox="0 0 24 24"><ellipse cx="12" cy="4" rx="11" ry="4" fill="#afb1b3"/><path d="M1 8c0 2.2 5 4 11 4s11-1.8 11-4v5c0 2.2-5 4-11 4S1 15.2 1 13z M1 16c0 2.2 5 4 11 4s11-1.8 11-4v4c0 2.2-5 4-11 4S1 22.2 1 20z" fill="#afb1b3"/></svg>
<div class="t" style="left:3563px;top:168.7px;font-size:22.5px;line-height:22.5px;color:#bbbbbb;transform-origin:0 0;transform:rotate(90deg) translate(0,-11.2px);">Database</div>
<svg style="left:3553px;top:1606px;" width="20" height="17" viewBox="0 0 20 17"><path d="M1.5 17V1.5h3.5L10 9l5-7.5h3.5V17h-4V8l-4.5 6.5L5.5 8v9z" fill="#afb1b3"/></svg>
<div class="t" style="left:3563px;top:1635px;font-size:22.5px;line-height:22.5px;color:#bbbbbb;transform-origin:0 0;transform:rotate(90deg) translate(0,-11.2px);">make</div>
<svg style="left:3550px;top:1734px" width="26" height="26" viewBox="0 0 26 26"><rect x="1.5" y="1.5" width="23" height="23" rx="2" fill="#3c3f41" stroke="#0d0d0d" stroke-width="3"/><rect x="1.5" y="1.5" width="23" height="5" fill="#0d0d0d"/><circle cx="16" cy="4" r="0.9" fill="#555"/><circle cx="19" cy="4" r="0.9" fill="#555"/><circle cx="22" cy="4" r="0.9" fill="#555"/><text x="4.5" y="19.5" font-family="Liberation Sans" font-weight="bold" font-size="10" fill="#0d0d0d" textLength="17.5" lengthAdjust="spacingAndGlyphs">/API</text></svg>
<div class="t" style="left:3563px;top:1768px;font-size:22.5px;line-height:22.5px;color:#bbbbbb;transform-origin:0 0;transform:rotate(90deg) translate(0,-11.2px);">API Security Audit</div>
<div style="left:0px;top:1974px;width:3584px;height:2px;background:#2f3133;"></div>
<div style="left:0px;top:1976px;width:3584px;height:40px;background:#3c3f41;"></div>
<svg style="left:61px;top:1983px;" width="19" height="27" viewBox="0 0 19 27"><circle cx="4" cy="4" r="3.3" fill="#afb1b3"/><circle cx="4" cy="23" r="3.3" fill="#afb1b3"/><circle cx="15.5" cy="8" r="3.3" fill="#afb1b3"/><path d="M4 4V23 M15.5 8c0 7-11.5 6-11.5 12" stroke="#afb1b3" stroke-width="3" fill="none"/></svg>
<div class="t " style="left:92.5px;top:1986.05px;font-size:22.3px;line-height:22.3px;color:#bbbbbb;font-family:'Liberation Sans', sans-serif;">Git</div>
<svg style="left:164px;top:1986px;" width="20" height="20" viewBox="0 0 20 20"><path d="M0 3h4M7 3h13M0 10h4M7 10h13M0 17h4M7 17h13" stroke="#afb1b3" stroke-width="3.6"/></svg>
<div class="t " style="left:194.6px;top:1986.98px;font-size:21.2px;line-height:21.2px;color:#bbbbbb;font-family:'Liberation Sans', sans-serif;">TODO</div>
<svg style="left:298px;top:1985px;" width="22" height="22" viewBox="0 0 22 22"><circle cx="11" cy="11" r="11" fill="#afb1b3"/><path d="M11 4v9" stroke="#3c3f41" stroke-width="3.5"/><circle cx="11" cy="17" r="2" fill="#3c3f41"/></svg>
<div class="t " style="left:330.7px;top:1986.05px;font-size:22.3px;line-height:22.3px;color:#bbbbbb;font-family:'Liberation Sans', sans-serif;">Problems</div>
<svg style="left:470px;top:1986px;" width="22" height="20" viewBox="0 0 22 20"><rect width="22" height="20" fill="#afb1b3"/><path d="M3 4l5 4-5 4" stroke="#3c3f41" stroke-width="2.2" fill="none"/><path d="M10 15h8" stroke="#3c3f41" stroke-width="2.2"/></svg>
<div class="t " style="left:503px;top:1986.13px;font-size:22.2px;line-height:22.2px;color:#bbbbbb;font-family:'Liberation Sans', sans-serif;">Terminal</div>
<svg style="left:3152px;top:1984px;" width="26" height="26" viewBox="0 0 26 26"><path d="M24 24H13A11 11 0 1 1 24 13z" stroke="#afb1b3" stroke-width="3" fill="none"/></svg>
<div class="t " style="left:3186.7px;top:1986.05px;font-size:22.3px;line-height:22.3px;color:#bbbbbb;font-family:'Liberation Sans', sans-serif;">Event Log</div>
<svg style="left:3330px;top:1983px" width="26" height="26" viewBox="0 0 26 26"><rect x="1.5" y="1.5" width="23" height="23" rx="2" fill="#3c3f41" stroke="#0d0d0d" stroke-width="3"/><rect x="1.5" y="1.5" width="23" height="5" fill="#0d0d0d"/><circle cx="16" cy="4" r="0.9" fill="#555"/><circle cx="19" cy="4" r="0.9" fill="#555"/><circle cx="22" cy="4" r="0.9" fill="#555"/><text x="4.5" y="19.5" font-family="Liberation Sans" font-weight="bold" font-size="10" fill="#0d0d0d" textLength="17.5" lengthAdjust="spacingAndGlyphs">/API</text></svg>
<div class="t " style="left:3364.6px;top:1985.88px;font-size:22.5px;line-height:22.5px;color:#bbbbbb;font-family:'Liberation Sans', sans-serif;">Audit Problems</div>
<div style="left:0px;top:2016px;width:3584px;height:2px;background:#474849;"></div>
<div style="left:0px;top:2018px;width:3584px;height:40px;background:#3c3f41;"></div>
<svg style="left:12px;top:2026px;" width="24" height="24" viewBox="0 0 24 24"><path d="M6 1h17v17H6z M1 6v17h17" stroke="#afb1b3" stroke-width="2" fill="none"/></svg>
<div class="t " style="left:3083.7px;top:2027.96px;font-size:22.4px;line-height:22.4px;color:#bbbbbb;font-family:'Liberation Sans', sans-serif;">15:39</div>
<div class="t " style="left:3164px;top:2027.96px;font-size:22.4px;line-height:22.4px;color:#bbbbbb;font-family:'Liberation Sans', sans-serif;">LF</div>
<div class="t " style="left:3212px;top:2027.96px;font-size:22.4px;line-height:22.4px;color:#bbbbbb;font-family:'Liberation Sans', sans-serif;">UTF-8</div>
<div class="t " style="left:3302.9px;top:2027.96px;font-size:22.4px;line-height:22.4px;color:#bbbbbb;font-family:'Liberation Sans', sans-serif;">Tab</div>
<div class="t " style="left:3396.7px;top:2027.96px;font-size:22.4px;line-height:22.4px;color:#bbbbbb;font-family:'Liberation Sans', sans-serif;">master</div>
<svg style="left:3364px;top:2025px;" width="22" height="29" viewBox="0 0 22 29"><circle cx="4.5" cy="4.5" r="3.5" fill="#afb1b3"/><circle cx="4.5" cy="24.5" r="3.5" fill="#afb1b3"/><circle cx="17" cy="7" r="3.5" fill="#afb1b3"/><path d="M4.5 4.5V24.5 M17 7c0 8-12.5 6-12.5 13" stroke="#afb1b3" stroke-width="3" fill="none"/></svg>
<svg style="left:3486px;top:2027px;" width="23" height="24" viewBox="0 0 23 24"><path d="M4 11V6a5 5 0 0 1 10 0" stroke="#afb1b3" stroke-width="2.5" fill="none"/><rect x="7" y="11" width="16" height="13" fill="#afb1b3"/></svg>
<svg style="left:3532px;top:2022px;" width="32" height="34" viewBox="0 0 32 34"><circle cx="13" cy="11" r="8" fill="#afb1b3"/><circle cx="21" cy="15.5" r="5.8" fill="#afb1b3"/><circle cx="6" cy="16" r="5" fill="#afb1b3"/><rect x="1" y="13" width="25" height="9" rx="4.5" fill="#afb1b3"/><path d="M10 9.5a3.3 3.3 0 1 1 4.2 3.2c-.8.4-1.2 1-1.2 2v1" stroke="#3c3f41" stroke-width="2.2" fill="none"/><circle cx="13" cy="19" r="1.4" fill="#3c3f41"/><circle cx="25" cy="25.5" r="8.5" fill="#3c3f41"/><circle cx="25" cy="25.5" r="5.2" stroke="#afb1b3" stroke-width="3.2" fill="none" stroke-dasharray="2.6 1.5"/><circle cx="25" cy="25.5" r="4.5" stroke="#afb1b3" stroke-width="2" fill="none"/></svg>
<div style="left:0;top:0;width:3580px;height:2054px;border:2px solid #5d5f61;border-radius:22px;"></div>
<svg width="0" height="0" style="left:0;top:0"><defs>
<g id="gopher">
<circle cx="2.5" cy="5" r="2.3" fill="#74b9e0"/><circle cx="17.5" cy="5" r="2.3" fill="#74b9e0"/>
<path d="M2 10C2 3 5 0.5 10 0.5S18 3 18 10V21C18 25.5 14.5 27.5 10 27.5S2 25.5 2 21z" fill="#74b9e0"/>
<circle cx="1.3" cy="14.5" r="1.2" fill="#c9a07f"/><circle cx="18.7" cy="14.5" r="1.2" fill="#c9a07f"/>
<circle cx="3.2" cy="26.5" r="1.2" fill="#c9a07f"/><circle cx="16.8" cy="26.5" r="1.2" fill="#c9a07f"/>
<circle cx="6.5" cy="8.2" r="3" fill="#fff"/><circle cx="13.5" cy="8.2" r="3" fill="#fff"/>
<circle cx="6.8" cy="8.2" r="1.4" fill="#000"/><circle cx="13.2" cy="8.2" r="1.4" fill="#000"/>
<ellipse cx="10" cy="11.5" rx="1.3" ry="0.9" fill="#222"/><rect x="9" y="12.3" width="2" height="1.8" fill="#fff"/>
</g>
<g id="gopherdim">
<circle cx="2.5" cy="5" r="2.3" fill="#4d6b80"/><circle cx="17.5" cy="5" r="2.3" fill="#4d6b80"/>
<path d="M2 10C2 3 5 0.5 10 0.5S18 3 18 10V21C18 25.5 14.5 27.5 10 27.5S2 25.5 2 21z" fill="#4d6b80"/>
<circle cx="6.5" cy="8.2" r="3" fill="#a8a8a8"/><circle cx="13.5" cy="8.2" r="3" fill="#a8a8a8"/>
<circle cx="6.8" cy="8.2" r="1.4" fill="#222"/><circle cx="13.2" cy="8.2" r="1.4" fill="#222"/>
</g>
</defs></svg>
</div></body></html>
